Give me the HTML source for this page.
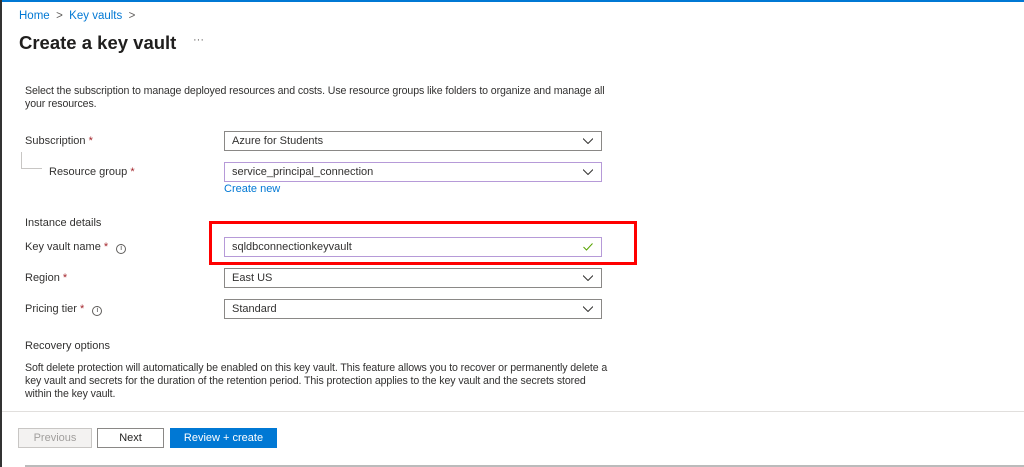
<!DOCTYPE html>
<html><head><style>
body{margin:0;width:1024px;height:467px;background:#fff;position:relative;overflow:hidden;font-family:"Liberation Sans",sans-serif;color:#323130}
.a{position:absolute}
.lbl{font-size:11px;left:25px}
.star{color:#a4262c}
.inp{position:absolute;left:224px;width:369px;height:18px;border:1px solid #8a8886;font-size:11px;line-height:18px;padding-left:7px;box-sizing:content-box}
.inp.p{border-color:#b69ad8}
.chev{position:absolute;right:8px;top:6px;width:10px;height:6px}
.info{display:inline-block;width:8px;height:8px;border:1px solid #605e5c;border-radius:50%;font-size:7px;line-height:8px;text-align:center;margin-left:8px;vertical-align:0}
.btn{position:absolute;top:428px;height:18px;font-size:11px;line-height:18px;text-align:center;box-sizing:content-box}
.par{font-size:10.6px;letter-spacing:-0.1px}
</style></head><body>
<div class="a" style="left:0;top:0;width:1024px;height:2px;background:#0078d4"></div>
<div class="a" style="left:0;top:0;width:2px;height:467px;background:#333"></div>
<div class="a" style="left:19px;top:10px;font-size:11.5px;color:#0078d4">Home <span style="color:#605e5c">&nbsp;&gt;&nbsp;</span> Key vaults <span style="color:#605e5c">&nbsp;&gt;</span></div>
<div class="a" style="left:19px;top:32px;font-size:18.5px;color:#201f1e;font-weight:bold">Create a key vault</div>
<div class="a" style="left:193px;top:34px;font-size:11px;color:#605e5c">···</div>
<div class="a lbl par" style="top:85px;width:600px;line-height:13px">Select the subscription to manage deployed resources and costs. Use resource groups like folders to organize and manage all your resources.</div>
<div class="a lbl" style="top:135px">Subscription <span class="star">*</span></div>
<div class="inp" style="top:131px">Azure for Students<svg class="chev" viewBox="0 0 10 6"><path d="M0 0.5L5 5.5 10 0.5" fill="none" stroke="#323130"/></svg></div>
<div class="a" style="left:21px;top:152px;width:1px;height:16px;background:#c8c6c4"></div>
<div class="a" style="left:21px;top:168px;width:21px;height:1px;background:#c8c6c4"></div>
<div class="a lbl" style="left:49px;top:166px">Resource group <span class="star">*</span></div>
<div class="inp p" style="top:162px">service_principal_connection<svg class="chev" viewBox="0 0 10 6"><path d="M0 0.5L5 5.5 10 0.5" fill="none" stroke="#323130"/></svg></div>
<div class="a" style="left:224px;top:183px;font-size:11px;color:#0078d4">Create new</div>
<div class="a lbl" style="top:217px">Instance details</div>
<div class="a lbl" style="top:241px">Key vault name <span class="star">*</span><span class="info">i</span></div>
<div class="inp p" style="top:237px">sqldbconnectionkeyvault<svg class="chev" viewBox="0 0 10 8" style="height:8px;top:5px"><path d="M0.5 4L3.5 7 9.5 0.5" fill="none" stroke="#57a300"/></svg></div>
<div class="a" style="left:209px;top:221px;width:422px;height:38px;border:3px solid #f00"></div>
<div class="a lbl" style="top:272px">Region <span class="star">*</span></div>
<div class="inp" style="top:268px">East US<svg class="chev" viewBox="0 0 10 6"><path d="M0 0.5L5 5.5 10 0.5" fill="none" stroke="#323130"/></svg></div>
<div class="a lbl" style="top:303px">Pricing tier <span class="star">*</span><span class="info">i</span></div>
<div class="inp" style="top:299px">Standard<svg class="chev" viewBox="0 0 10 6"><path d="M0 0.5L5 5.5 10 0.5" fill="none" stroke="#323130"/></svg></div>
<div class="a lbl" style="top:340px">Recovery options</div>
<div class="a lbl par" style="top:362px;width:588px;line-height:13px">Soft delete protection will automatically be enabled on this key vault. This feature allows you to recover or permanently delete a key vault and secrets for the duration of the retention period. This protection applies to the key vault and the secrets stored within the key vault.</div>
<div class="a" style="left:2px;top:411px;width:1022px;height:1px;background:#e1dfdd"></div>
<div class="btn" style="left:18px;width:72px;border:1px solid #c8c6c4;background:#f3f2f1;color:#a19f9d">Previous</div>
<div class="btn" style="left:97px;width:65px;border:1px solid #8a8886;color:#201f1e">Next</div>
<div class="btn" style="left:170px;width:107px;height:20px;background:#0078d4;color:#fff;line-height:20px">Review + create</div>
<div class="a" style="left:25px;top:465px;width:999px;height:2px;background:#bbb"></div>
</body></html>
